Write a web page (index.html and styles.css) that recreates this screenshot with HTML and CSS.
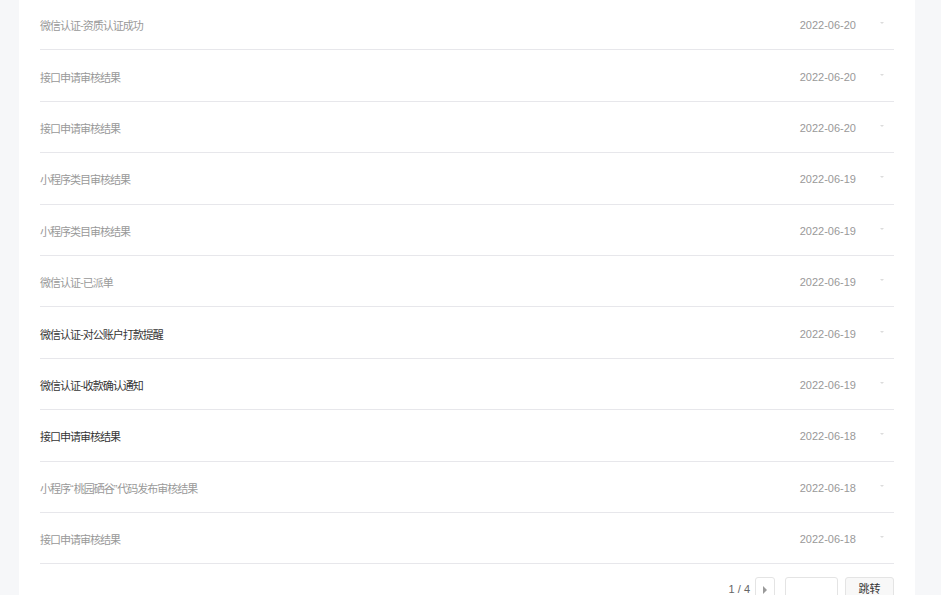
FILE: index.html
```html
<!DOCTYPE html>
<html lang="zh-CN">
<head>
<meta charset="utf-8">
<title>消息列表</title>
<link rel="stylesheet" href="styles.css">
</head>
<body>
<div class="card">
  <ul class="list">
    <li class="row"><span class="title">微信认证-资质认证成功</span><span class="date">2022-06-20</span><span class="caret"></span></li>
    <li class="row"><span class="title">接口申请审核结果</span><span class="date">2022-06-20</span><span class="caret"></span></li>
    <li class="row"><span class="title">接口申请审核结果</span><span class="date">2022-06-20</span><span class="caret"></span></li>
    <li class="row"><span class="title">小程序类目审核结果</span><span class="date">2022-06-19</span><span class="caret"></span></li>
    <li class="row"><span class="title">小程序类目审核结果</span><span class="date">2022-06-19</span><span class="caret"></span></li>
    <li class="row"><span class="title">微信认证-已派单</span><span class="date">2022-06-19</span><span class="caret"></span></li>
    <li class="row unread"><span class="title">微信认证-对公账户打款提醒</span><span class="date">2022-06-19</span><span class="caret"></span></li>
    <li class="row unread"><span class="title">微信认证-收款确认通知</span><span class="date">2022-06-19</span><span class="caret"></span></li>
    <li class="row unread"><span class="title">接口申请审核结果</span><span class="date">2022-06-18</span><span class="caret"></span></li>
    <li class="row"><span class="title">小程序<span class="q">“</span>桃园硒谷<span class="q">”</span>代码发布审核结果</span><span class="date">2022-06-18</span><span class="caret"></span></li>
    <li class="row"><span class="title">接口申请审核结果</span><span class="date">2022-06-18</span><span class="caret"></span></li>
  </ul>
  <div class="pager">
    <span class="page-num">1 / 4</span>
    <button class="next" type="button"><span class="tri"></span></button>
    <input class="jump-input" type="text">
    <button class="jump-btn" type="button">跳转</button>
  </div>
</div>
</body>
</html>
```

FILE: styles.css
```css
html, body {
  margin: 0;
  padding: 0;
  background: #f6f7f9;
  font-family: "Noto Sans CJK SC", "Noto Sans", sans-serif;
  overflow: hidden;
}

.card {
  margin: -1px 0 0 19px;
  width: 896px;
  background: #ffffff;
  padding: 0 21px 40px 21px;
  box-sizing: border-box;
  min-height: 700px;
}

.list {
  list-style: none;
  margin: 0;
  padding: 0;
}

.row {
  display: flex;
  align-items: center;
  height: 51.4px;
  box-sizing: border-box;
  border-bottom: 1px solid #e7e7eb;
  font-size: 11px;
  color: #999999;
  padding-top: 2px;
}

.row.unread .title {
  color: #353535;
}

.title {
  flex: 1;
  letter-spacing: -1px;
}

.q {
  font-family: "Liberation Sans", Arial, sans-serif;
  letter-spacing: 0;
}

.date {
  font-family: "Liberation Sans", Arial, sans-serif;
  font-size: 11px;
  color: #999999;
}

.caret {
  width: 0;
  height: 0;
  margin: 0 10px 4px 24px;
  border-left: 2px solid transparent;
  border-right: 2px solid transparent;
  border-top: 2px solid #dcdcdc;
}

.pager {
  display: flex;
  justify-content: flex-end;
  align-items: flex-start;
  padding-top: 13px;
}

.page-num {
  font-family: "Liberation Sans", Arial, sans-serif;
  font-size: 11px;
  color: #666666;
  margin-top: 6px;
  margin-right: 5px;
}

.next {
  width: 20px;
  height: 30px;
  box-sizing: border-box;
  border: 1px solid #e4e4e4;
  border-radius: 3px;
  background: #ffffff;
  padding: 0;
  margin-right: 10px;
  display: flex;
  justify-content: center;
  align-items: flex-start;
  padding-top: 8px;
}

.tri {
  width: 0;
  height: 0;
  border-top: 4px solid transparent;
  border-bottom: 4px solid transparent;
  border-left: 4px solid #9a9a9a;
}

.jump-input {
  width: 53px;
  height: 30px;
  box-sizing: border-box;
  border: 1px solid #e4e4e4;
  border-radius: 3px;
  margin: 0 7px 0 0;
  padding: 0 4px;
}

.jump-btn {
  width: 49px;
  height: 30px;
  box-sizing: border-box;
  border: 1px solid #e4e4e4;
  border-radius: 3px;
  background: #f8f8f8;
  font-family: "Noto Sans CJK SC", sans-serif;
  font-size: 11px;
  color: #353535;
  padding: 0;
  line-height: 20px;
  display: flex;
  justify-content: center;
  align-items: flex-start;
}
```
